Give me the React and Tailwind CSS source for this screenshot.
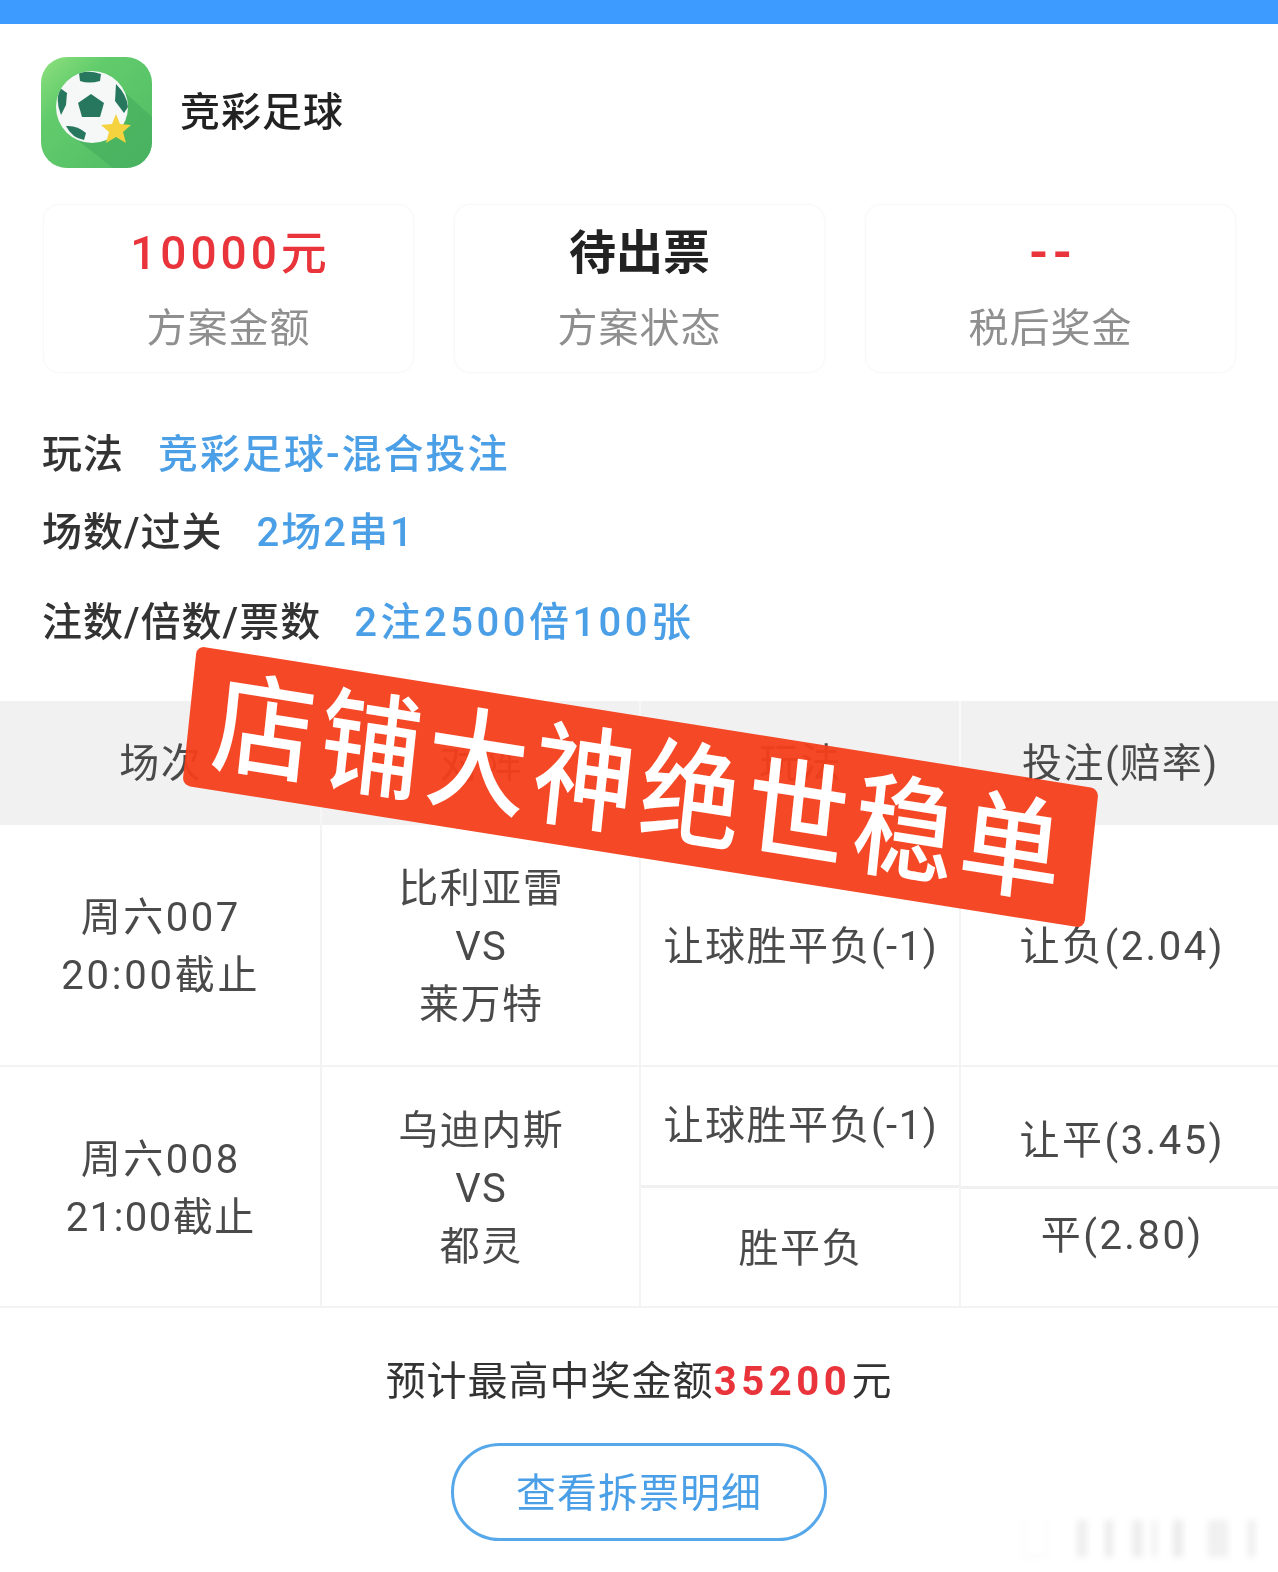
const FONT = "font-['Roboto','Noto_Sans_CJK_SC',sans-serif]";

function BallIcon() {
  return (
    <svg width="111" height="111" viewBox="0 0 111 111" className="shrink-0">
      <defs>
        <linearGradient id="bg" x1="0" y1="0" x2="1" y2="1">
          <stop offset="0" stopColor="#8fe07d" />
          <stop offset="0.3" stopColor="#62cc6c" />
          <stop offset="1" stopColor="#4fba64" />
        </linearGradient>
        <clipPath id="ball">
          <circle cx="51" cy="50" r="36" />
        </clipPath>
        <clipPath id="tile">
          <rect width="111" height="111" rx="26" />
        </clipPath>
      </defs>
      <rect width="111" height="111" rx="26" fill="url(#bg)" />
      <path d="M80 32 L111 60 V111 H72 L30 78 Z" fill="#44ab5e" opacity="0.6" clipPath="url(#tile)" />
      <circle cx="51" cy="50" r="36" fill="#f5f8f6" />
      <g clipPath="url(#ball)" fill="#27775f">
        <path d="M50 37 L63 46 L59 60 L41 60 L37 46 Z" />
        <path d="M38 16 Q48 13 60 17 L59 24 Q48 27 39 24 Z" />
        <path d="M19 31 L26 36 L25 48 L20 58 Q14 44 19 31 Z" />
        <path d="M75 27 Q86 38 87 50 L83 56 L74 44 Z" />
        <path d="M25 69 Q36 68 45 76 L43 83 Q31 81 25 69 Z" />
      </g>
      <path d="M75 57 L79 67 L90 68 L82 75 L85 86 L75 80 L65 86 L68 75 L60 68 L71 67 Z" fill="#f5d33f" />
    </svg>
  );
}

function Stat({ value, label, valueClass }) {
  return (
    <div className="flex h-[169px] flex-col items-center rounded-2xl border border-[#f8f8f8] pt-[19px] shadow-[0_0_3px_rgba(0,0,0,0.03)]">
      <div className={`h-[58px] leading-[58px] ${valueClass}`}>{value}</div>
      <div className="mt-[18px] text-[40px] leading-[58px] tracking-[1px] text-[#8f8f8f]">{label}</div>
    </div>
  );
}

function Info({ label, value, className, valueClass }) {
  return (
    <div className={`flex items-center text-[40px] leading-[58px] ${className}`}>
      <span className="font-medium tracking-[1px] text-[#333]">{label}</span>
      <span className={`font-medium text-[#4a9fe6] ${valueClass}`}>{value}</span>
    </div>
  );
}

function Cell({ children, className = "" }) {
  return (
    <div className={`flex flex-col items-center justify-center pl-[2px] text-center text-[40px] leading-[58px] tracking-[1.5px] text-[#4a4a4a] ${className}`}>
      {children}
    </div>
  );
}

export default function App() {
  return (
    <div className={`relative h-[1572px] w-[1278px] overflow-hidden bg-white blur-[0.6px] ${FONT}`}>
      <div className="h-6 bg-[#3d9bff]" />

      <div className="flex items-center gap-7 pl-[41px] pt-[33px]">
        <BallIcon />
        <div className="text-[40px] font-medium tracking-[1px] text-[#222]">竞彩足球</div>
      </div>

      <div className="mt-[36px] grid grid-cols-3 gap-[40px] pl-[43px] pr-[42px]">
        <Stat value="10000元" label="方案金额" valueClass="pl-1 text-[46px] font-medium tracking-[4px] text-[#e8343a]" />
        <Stat value="待出票" label="方案状态" valueClass="text-[47px] font-bold text-[#222]" />
        <Stat value="--" label="税后奖金" valueClass="pl-1 text-[50px] font-bold tracking-[4px] text-[#e8343a]" />
      </div>

      <div className="pl-[42px]">
        <Info className="mt-[53px] gap-[34px]" label="玩法" value="竞彩足球-混合投注" valueClass="tracking-[2px]" />
        <Info className="mt-[20px] gap-[34px]" label="场数/过关" value="2场2串1" valueClass="tracking-[2px]" />
        <Info className="mt-[32px] gap-[33px]" label="注数/倍数/票数" value="2注2500倍100张" valueClass="tracking-[3.5px]" />
      </div>

      <div className="mt-[49px] grid h-[124px] grid-cols-4 bg-[#f1f1f1]">
        <Cell className="pt-[2px]">场次</Cell>
        <Cell className="border-l-2 border-[#f6f6f6] pt-[2px]">对阵</Cell>
        <Cell className="border-l-2 border-[#f6f6f6] pt-[2px]">玩法</Cell>
        <Cell className="border-l-2 border-[#f9f9f9] pt-[2px]">投注(赔率)</Cell>
      </div>

      <div className="grid h-[242px] grid-cols-4 border-b-2 border-[#f3f3f3]">
        <Cell className="pt-1">
          <span className="tracking-[2.5px]">周六007</span>
          <span className="tracking-[2.8px]">20:00截止</span>
        </Cell>
        <Cell className="border-l-2 border-[#f3f3f3] pt-1">
          <span>比利亚雷</span>
          <span>VS</span>
          <span>莱万特</span>
        </Cell>
        <Cell className="border-l-2 border-[#f3f3f3] pt-1">让球胜平负(-1)</Cell>
        <Cell className="border-l-2 border-[#f3f3f3] pt-1 pl-[6px] tracking-[2.5px]">让负(2.04)</Cell>
      </div>

      <div className="grid h-[241px] grid-cols-4 border-b-2 border-[#f3f3f3]">
        <Cell className="pt-1">
          <span className="tracking-[2.5px]">周六008</span>
          <span className="tracking-[1.5px]">21:00截止</span>
        </Cell>
        <Cell className="border-l-2 border-[#f3f3f3] pt-1">
          <span>乌迪内斯</span>
          <span>VS</span>
          <span>都灵</span>
        </Cell>
        <div className="flex flex-col border-l-2 border-[#f3f3f3]">
          <Cell className="h-[121px] border-b-[3px] border-[#f0f0f0]">让球胜平负(-1)</Cell>
          <Cell className="flex-1 pt-1">胜平负</Cell>
        </div>
        <div className="flex flex-col border-l-2 border-[#f3f3f3]">
          <Cell className="h-[122px] pt-[28px] pl-[6px] tracking-[2.5px] border-b-[3px] border-[#f0f0f0]">让平(3.45)</Cell>
          <Cell className="flex-1 pb-[24px] pl-[6px] tracking-[2.5px]">平(2.80)</Cell>
        </div>
      </div>

      <div className="mt-[45px] text-center text-[40px] leading-[58px] tracking-[1px] text-[#333]">
        预计最高中奖金额<span className="font-bold tracking-[4.6px] text-[#e8343a]">35200</span>元
      </div>

      <button className="mx-auto mt-[32px] flex h-[98px] w-[376px] items-center justify-center rounded-full border-[3px] border-[#56a8ea] bg-white pt-[3px] text-[40px] tracking-[1px] text-[#4a9fe6]">
        查看拆票明细
      </button>

      {/* overlay banner, slightly see-through like the original sticker */}
      <div className="absolute left-[184px] top-[717px] flex h-[140px] w-[913px] rotate-[9deg] skew-x-[3deg] items-center justify-center rounded-lg bg-[#f43e1a]/95 pt-[6px] text-[102px] font-medium leading-none tracking-[6px] text-white">
        <span className="inline-block scale-y-110">店铺大神绝世稳单</span>
      </div>

      {/* faint watermark */}
      <div className="absolute left-[1023px] top-[1520px] flex h-[37px] items-stretch blur-[3px]">
        <div className="w-[24px] rounded-b-md border-x border-b border-[#eeeeee]" />
        <div className="ml-[30px] w-[10px] bg-[#eeeeee]" />
        <div className="ml-[18px] w-[8px] bg-[#ebebeb]" />
        <div className="ml-[19px] w-[11px] bg-[#eeeeee]" />
        <div className="ml-[9px] w-[5px] bg-[#f0f0f0]" />
        <div className="ml-[16px] w-[10px] bg-[#ebebeb]" />
        <div className="ml-[25px] w-[20px] bg-[#f0f0f0]" />
        <div className="ml-[20px] w-[7px] bg-[#eeeeee]" />
      </div>
    </div>
  );
}
